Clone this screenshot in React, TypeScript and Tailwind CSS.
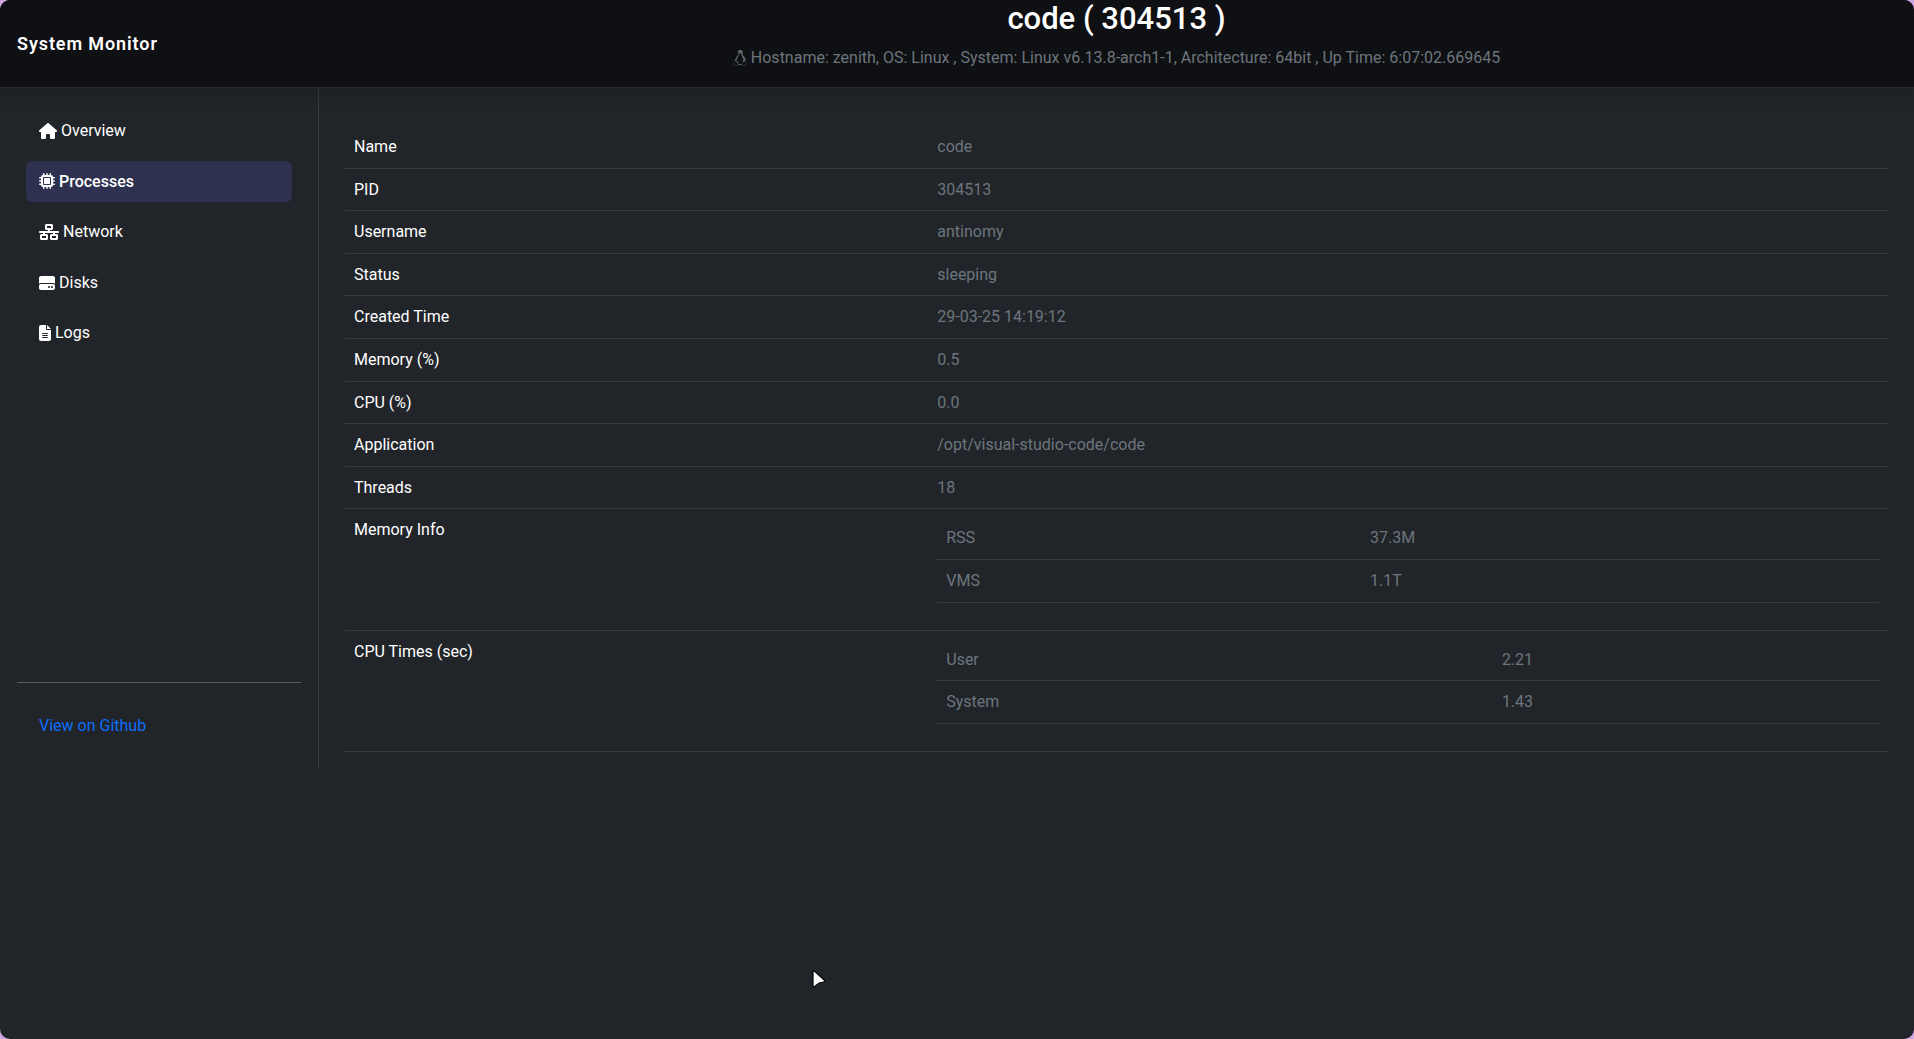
import type { ReactNode } from "react";
import { FaFileLines, FaHardDrive, FaHouse, FaLinux, FaMicrochip, FaNetworkWired } from "react-icons/fa6";

const links = [
  { label: "Overview", icon: FaHouse, size: "w-[18px]" },
  { label: "Processes", icon: FaMicrochip, size: "w-4", active: true },
  { label: "Network", icon: FaNetworkWired, size: "w-5" },
  { label: "Disks", icon: FaHardDrive, size: "w-4" },
  { label: "Logs", icon: FaFileLines, size: "w-3" },
];

const details = [
  ["Name", "code"],
  ["PID", "304513"],
  ["Username", "antinomy"],
  ["Status", "sleeping"],
  ["Created Time", "29-03-25 14:19:12"],
  ["Memory (%)", "0.5"],
  ["CPU (%)", "0.0"],
  ["Application", "/opt/visual-studio-code/code"],
  ["Threads", "18"],
];

function Row({ label, children }: { label: string; children: ReactNode }) {
  return (
    <tr className="border-b border-[#373b3e] align-top">
      <th scope="row" className="w-[37.8%] px-[9px] py-2 text-left font-normal text-white">{label}</th>
      <td className="px-[9px] py-2 text-[#6c757d]">{children}</td>
    </tr>
  );
}

function SubTable({ label, rows, col }: { label: string; rows: string[][]; col: string }) {
  return (
    <table aria-label={label} className="mb-[19px] w-full table-fixed border-collapse">
      <tbody>
        {rows.map(([name, value]) => (
          <tr key={name} className="border-b border-[#373b3e]">
            <th scope="row" className={`${col} px-[9px] py-2 text-left font-normal`}>{name}</th>
            <td className="px-[9px] py-2">{value}</td>
          </tr>
        ))}
      </tbody>
    </table>
  );
}

export default function App() {
  return (
    <div className="min-h-screen bg-[#cba6e0]">
      <div className="relative min-h-screen overflow-hidden rounded-[10px] bg-[#212529] font-[Roboto,sans-serif] text-base leading-[1.6] text-white">
        <header className="relative flex h-[88px] border-b border-[#282a2d] bg-[#0f1013] shadow-[0_8px_16px_rgba(0,0,0,0.15)]">
          <div className="flex w-[319px] shrink-0 items-center pl-[17px] text-lg font-semibold tracking-wider">System Monitor</div>
          <div className="flex flex-1 flex-col items-center text-center">
            <h1 className="text-[31px] font-medium leading-[37px]">code ( 304513 )</h1>
            <p className="mt-2 flex items-center gap-1 text-[#6c757d]">
              <FaLinux className="h-4 w-[14px]" aria-hidden="true" />
              Hostname: zenith, OS: Linux , System: Linux v6.13.8-arch1-1, Architecture: 64bit , Up Time: 6:07:02.669645
            </p>
          </div>
        </header>

        <div className="flex">
          <aside className="flex w-[319px] shrink-0 flex-col justify-between border-r border-[#373b3e] px-[17px] pt-[22px] pb-[22px]">
            <nav className="flex flex-col gap-[9px] px-[9px]">
              {links.map(({ label, icon: Icon, size, active }) => (
                <a
                  key={label}
                  href="#"
                  aria-current={active ? "page" : undefined}
                  className={`flex items-center gap-1 rounded-md px-[13px] py-2 ${active ? "bg-[#2e3250] font-medium" : ""}`}
                >
                  <Icon className={`h-4 ${size}`} aria-hidden="true" />
                  {label}
                </a>
              ))}
            </nav>
            <div>
              <hr className="border-[#585b5f]" />
              <a href="#" className="mt-[22px] block px-[22px] py-2 text-[#0d6efd]">View on Github</a>
            </div>
          </aside>
          <main className="min-w-0 flex-1 px-[26px] pt-[38px] pb-[17px]">
            <table aria-label="Process details" className="w-full table-fixed border-collapse">
              <tbody>
                {details.map(([label, value]) => (
                  <Row key={label} label={label}>{value}</Row>
                ))}
                <Row label="Memory Info">
                  <SubTable label="Memory Info" col="w-[45%]" rows={[["RSS", "37.3M"], ["VMS", "1.1T"]]} />
                </Row>
                <Row label="CPU Times (sec)">
                  <SubTable label="CPU Times" col="w-[59%]" rows={[["User", "2.21"], ["System", "1.43"]]} />
                </Row>
              </tbody>
            </table>
          </main>
        </div>

        <svg className="absolute top-[969px] left-[811px] h-[20px] w-[16px]" viewBox="0 0 16 20" aria-hidden="true">
          <path d="M2 3.2Q2 1.2 3.6 2.4L13.2 11Q14.2 12.6 12.4 13Q8.6 13 6.2 15.4L3.6 17.6Q2 18.4 2 16.6Z" fill="#fff" stroke="#000" strokeWidth="1.2" />
        </svg>
      </div>
    </div>
  );
}
